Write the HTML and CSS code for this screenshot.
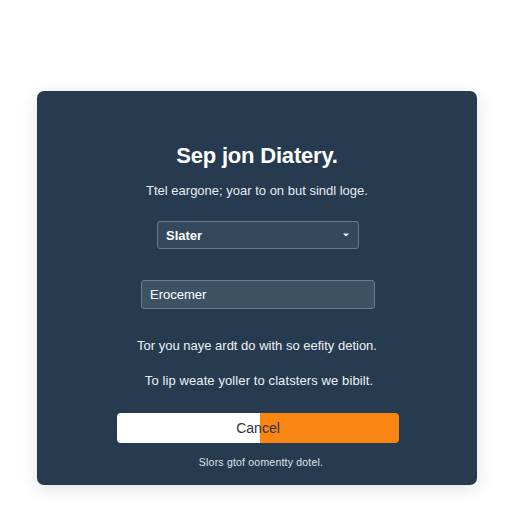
FILE: index.html
```html
<!DOCTYPE html>
<html>
<head>
<meta charset="utf-8">
<link rel="stylesheet" href="styles.css">
</head>
<body>
<main class="card">
  <h1 class="title">Sep jon Diatery.</h1>
  <p class="sub">Ttel eargone; yoar to on but sindl loge.</p>
  <div class="select">
    <span>Slater</span>
    <svg class="chev" width="8" height="6" viewBox="0 0 8 6"><path d="M1 1.5 L4 4.5 L7 1.5 Z" fill="#fff"/></svg>
  </div>
  <div class="input"><span>Erocemer</span></div>
  <p class="line line1">Tor you naye ardt do with so eefity detion.</p>
  <p class="line line2">To lip weate yoller to clatsters we bibilt.</p>
  <div class="btn">
    <span class="btn-white"></span>
    <span class="btn-orange"></span>
    <span class="btn-label">Cancel</span>
  </div>
  <p class="foot">Slors gtof oomentty dotel.</p>
</main>
</body>
</html>
```
FILE: styles.css
```css
* { box-sizing: border-box; }
html, body { margin: 0; padding: 0; background: #ffffff; }
body {
  width: 512px; height: 512px;
  font-family: "Liberation Sans", Arial, sans-serif;
  padding: 91px 0 0 37px;
}
.card {
  width: 440px; height: 394px;
  background: #263b50;
  border-radius: 7px;
  box-shadow: 0 4px 18px rgba(0,0,0,0.12);
  display: flex; flex-direction: column; align-items: center;
  padding-top: 52px;
  color: #f2f4f6;
}
.title {
  margin: 0; font-size: 22px; font-weight: bold; color: #ffffff;
  line-height: 26px; letter-spacing: -0.2px;
}
.sub {
  margin: 14px 0 0; font-size: 13px; line-height: 16px; color: #e8ecef;
}
.select {
  margin-top: 22px; width: 202px; height: 28px;
  border: 1px solid #66788a; border-radius: 3px;
  background: #34495d;
  display: flex; align-items: center; justify-content: space-between;
  padding: 0 8px 0 8px;
  font-size: 13px; font-weight: bold; color: #ffffff;
  align-self: flex-start; margin-left: 120px;
}
.input {
  margin-top: 31px; width: 234px; height: 29px;
  border: 1px solid #6a7c8e; border-radius: 3px;
  background: #3e5266;
  display: flex; align-items: center; padding: 0 8px;
  font-size: 13px; color: #ffffff;
  align-self: flex-start; margin-left: 104px;
}
.line { margin: 0; font-size: 13px; line-height: 16px; color: #eef1f4; }
.line1 { margin-top: 29px; }
.line2 { margin-top: 19px; letter-spacing: 0.1px; padding-left: 4px; }
.btn {
  position: relative; margin-top: 24px;
  width: 282px; height: 30px; border-radius: 4px; overflow: hidden;
  display: flex;
  align-self: flex-start; margin-left: 80px;
}
.btn-white { width: 143px; background: #ffffff; }
.btn-orange { flex: 1; background: #fb8512; }
.btn-label {
  position: absolute; left: 0; right: 0; top: 0; bottom: 0;
  display: flex; align-items: center; justify-content: center;
  font-size: 14px; color: #2b3440;
}
.foot { margin: 13px 0 0; padding-left: 8px; font-size: 10.5px; letter-spacing: 0.2px; color: #dfe4e9; }
```
